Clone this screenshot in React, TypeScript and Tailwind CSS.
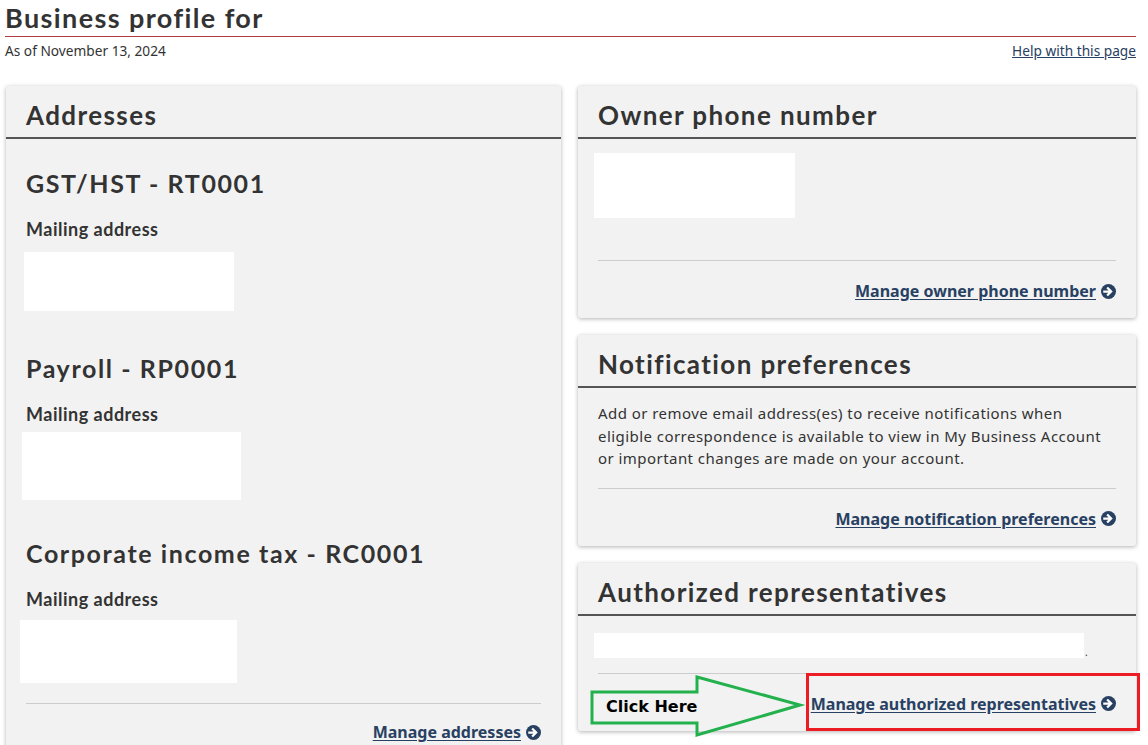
import React from 'react'

const lato = { fontFamily: 'Lato, "Noto Sans", sans-serif' }

function ArrowCircle() {
  return (
    <svg viewBox="0 0 16 16" className="ml-[5px] h-[15px] w-[15px] shrink-0">
      <circle cx="8" cy="8" r="8" fill="#284162" />
      <path d="M3.6 8h6.2M7.4 4.6 10.8 8l-3.4 3.4" fill="none" stroke="#fff" strokeWidth="2.4" strokeLinecap="square" />
    </svg>
  )
}

function ManageLink({ label }: { label: string }) {
  return (
    <div className="flex justify-end">
      <a href="#" className="flex items-center text-[16px] leading-5 font-bold text-[#284162] underline underline-offset-2">
        {label}
        <ArrowCircle />
      </a>
    </div>
  )
}

function Card({ title, children }: { title: string; children: React.ReactNode }) {
  return (
    <div className="rounded-[3px] bg-[#f2f2f2] shadow-[0_1px_4px_rgba(0,0,0,0.3)]">
      <div className="border-b-2 border-[#555] px-5 pt-[14px] pb-[7px]">
        <h2 className="text-[26px] leading-[30px] font-bold tracking-[1.4px] text-[#333]" style={lato}>{title}</h2>
      </div>
      {children}
    </div>
  )
}

function Program({ name, boxClass, top }: { name: string; boxClass: string; top: string }) {
  return (
    <>
      <h3 className={`${top} text-[25px] leading-[30px] font-bold tracking-[1.6px] text-[#333]`} style={lato}>{name}</h3>
      <p className="mt-[20px] text-[18px] leading-[22px] font-bold tracking-[0.5px] text-[#333]" style={lato}>Mailing address</p>
      <div className={boxClass} />
    </>
  )
}

export default function App() {
  return (
    <div className="min-h-screen bg-white text-[#333]" style={{ fontFamily: '"Noto Sans", sans-serif' }}>
      <div className="relative ml-[5px] w-[1131px]">
        <h1 className="border-b border-[#af3c43] pt-[2px] pb-[2px] text-[27px] leading-[32px] font-bold tracking-[1.4px] text-[#333]" style={lato}>
          Business profile for
        </h1>
        <div className="mt-[5px] flex items-center justify-between text-[13.7px] leading-[18px]">
          <span>As of November 13, 2024</span>
          <a href="#" className="text-[#284162] underline">Help with this page</a>
        </div>

        <div className="mt-[26px] flex items-start gap-[17px] pl-px">
          {/* left column */}
          <div className="w-[555px]">
            <Card title="Addresses">
              <div className="px-5 pb-[20px]">
                <Program name="GST/HST - RT0001" top="mt-[29px]" boxClass="mt-[12px] -ml-[2px] h-[59px] w-[210px] bg-white" />
                <Program name="Payroll - RP0001" top="mt-[42px]" boxClass="mt-[7px] -ml-[4px] h-[68px] w-[219px] bg-white" />
                <Program name="Corporate income tax - RC0001" top="mt-[38px]" boxClass="mt-[10px] -ml-[6px] h-[63px] w-[217px] bg-white" />
                <hr className="mt-[20px] border-[#ccc]" />
                <div className="mt-[18px]">
                  <ManageLink label="Manage addresses" />
                </div>
              </div>
            </Card>
          </div>

          {/* right column */}
          <div className="flex w-[558px] flex-col gap-[17px]">
            <Card title="Owner phone number">
              <div className="px-5 pb-[17px]">
                <div className="mt-[14px] -ml-[4px] h-[65px] w-[201px] bg-white" />
                <hr className="mt-[42px] border-[#ccc]" />
                <div className="mt-[20px]">
                  <ManageLink label="Manage owner phone number" />
                </div>
              </div>
            </Card>

            <Card title="Notification preferences">
              <div className="px-5 pb-[17px]">
                <p className="mt-[14px] text-[15px] leading-[22.5px] tracking-[0.45px] text-[#333]">
                  Add or remove email address(es) to receive notifications when eligible correspondence is available to view in My Business Account or important changes are made on your account.
                </p>
                <hr className="mt-[18px] border-[#ccc]" />
                <div className="mt-[20px]">
                  <ManageLink label="Manage notification preferences" />
                </div>
              </div>
            </Card>

            <Card title="Authorized representatives">
              <div className="px-5 pb-[17px]">
                <div className="mt-[17px] -ml-[4px] flex items-end">
                  <div className="h-[25px] w-[490px] bg-white" />
                  <span className="ml-px text-[10px] leading-3">.</span>
                </div>
                <hr className="mt-[15px] border-[#ccc]" />
                <div className="mt-[20px]">
                  <ManageLink label="Manage authorized representatives" />
                </div>
              </div>
            </Card>
          </div>
        </div>

        {/* annotation: arrow + highlight box */}
        <svg className="pointer-events-none absolute left-[582px] top-[672px] h-[68px] w-[224px]" viewBox="0 0 224 68">
          <polygon points="5,20 110,20 110,5 213,33 110,63 110,51 5,51" fill="none" stroke="#22b14c" strokeWidth="3" strokeLinejoin="miter" />
        </svg>
        <span className="pointer-events-none absolute left-[601px] top-[696px] text-[16px] leading-[22px] font-bold text-black" style={{ fontFamily: '"DejaVu Sans", sans-serif' }}>
          Click Here
        </span>
        <div className="pointer-events-none absolute left-[801px] top-[673px] h-[58px] w-[334px] border-[3px] border-[#ed1c24]" />
      </div>
    </div>
  )
}
